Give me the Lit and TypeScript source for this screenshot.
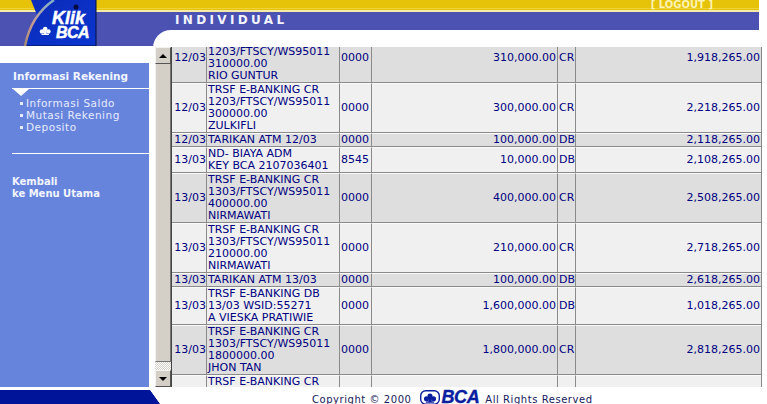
import { LitElement, html, css, svg } from "lit";
import { customElement } from "lit/decorators.js";

type Row = { date: string; lines: string[]; code: string; amount: string; type: string; balance: string };

const rows: Row[] = [
  { date: "12/03", lines: ["TRSF E-BANKING CR", "1203/FTSCY/WS95011", "310000.00", "RIO GUNTUR"], code: "0000", amount: "310,000.00", type: "CR", balance: "1,918,265.00" },
  { date: "12/03", lines: ["TRSF E-BANKING CR", "1203/FTSCY/WS95011", "300000.00", "ZULKIFLI"], code: "0000", amount: "300,000.00", type: "CR", balance: "2,218,265.00" },
  { date: "12/03", lines: ["TARIKAN ATM 12/03"], code: "0000", amount: "100,000.00", type: "DB", balance: "2,118,265.00" },
  { date: "13/03", lines: ["ND- BIAYA ADM", "KEY BCA 2107036401"], code: "8545", amount: "10,000.00", type: "DB", balance: "2,108,265.00" },
  { date: "13/03", lines: ["TRSF E-BANKING CR", "1303/FTSCY/WS95011", "400000.00", "NIRMAWATI"], code: "0000", amount: "400,000.00", type: "CR", balance: "2,508,265.00" },
  { date: "13/03", lines: ["TRSF E-BANKING CR", "1303/FTSCY/WS95011", "210000.00", "NIRMAWATI"], code: "0000", amount: "210,000.00", type: "CR", balance: "2,718,265.00" },
  { date: "13/03", lines: ["TARIKAN ATM 13/03"], code: "0000", amount: "100,000.00", type: "DB", balance: "2,618,265.00" },
  { date: "13/03", lines: ["TRSF E-BANKING DB", "13/03 WSID:55271", "A VIESKA PRATIWIE"], code: "0000", amount: "1,600,000.00", type: "DB", balance: "1,018,265.00" },
  { date: "13/03", lines: ["TRSF E-BANKING CR", "1303/FTSCY/WS95011", "1800000.00", "JHON TAN"], code: "0000", amount: "1,800,000.00", type: "CR", balance: "2,818,265.00" },
  { date: "", lines: ["TRSF E-BANKING CR"], code: "", amount: "", type: "", balance: "" },
];

const clover = (fill: string) => svg`
  <circle cx="10" cy="5.5" r="3.2" fill=${fill}></circle>
  <circle cx="5.6" cy="9" r="3.2" fill=${fill}></circle>
  <circle cx="14.4" cy="9" r="3.2" fill=${fill}></circle>
  <path d="M8.8 8h2.4l1 4.5h3v1.5H4.8v-1.5h3z" fill=${fill}></path>`;

@customElement("app-root")
export class AppRoot extends LitElement {
  static styles = css`
    :host {
      display: block;
      width: 767px;
      height: 404px;
      position: relative;
      overflow: hidden;
      background: #fff;
      font-family: "DejaVu Sans", Verdana, sans-serif;
      font-size: 11px;
    }
    .head { width: 759px; height: 46px; display: flex; flex-direction: column; }
    .gold {
      height: 12px;
      flex: none;
      display: flex;
      justify-content: flex-end;
      padding-right: 46px;
      background: linear-gradient(#e6c208 0 8px, #efd23a 8px 9px, #e6c208 9px 10px, #f5eba8 10px 12px);
    }
    .logout {
      font-size: 10px;
      line-height: 9px;
      height: 11px;
      font-weight: bold;
      letter-spacing: 0;
      color: #fbf3b4;
      white-space: pre;
    }
    .band {
      flex: 1;
      background: #4b52b2;
      padding-left: 175px;
      color: #f4f4ff;
      font-weight: bold;
      font-size: 12px;
      line-height: 17px;
      letter-spacing: 3.35px;
    }
    .logo { position: absolute; left: 24px; top: 0; width: 73px; height: 46px; }
    .logo svg { position: absolute; inset: 0; }
    .klik, .bca {
      position: absolute;
      font-family: "Liberation Sans", Arial, sans-serif;
      font-weight: bold;
      font-style: italic;
      color: #fff;
      line-height: 15px;
      -webkit-text-stroke: 0.5px #fff;
    }
    .klik { left: 28px; top: 11px; font-size: 18px; letter-spacing: 0; }
    .bca { left: 32px; top: 25px; font-size: 16px; letter-spacing: -0.6px; }

    .main { display: flex; height: 341px; }
    .side { width: 153px; flex: none; padding: 17px 0 0 0; box-sizing: border-box; }
    .panel {
      width: 149px;
      height: 324px;
      background: #6684dc;
      color: #fff;
      box-sizing: border-box;
      padding: 7px 0 0 12px;
      display: flex;
      flex-direction: column;
    }
    .ph { font-weight: bold; line-height: 13px; padding-bottom: 5px; border-bottom: 1px solid #fff; padding-left: 1px; color: #f2f5ff; font-size: 10.5px; }
    .tri {
      width: 0;
      height: 0;
      border-left: 8px solid transparent;
      border-right: 8px solid transparent;
      border-top: 7px solid #fff;
      margin-left: 1px;
    }
    ul { list-style: none; margin: 1px 0 0; padding: 0 0 0 8px; }
    li { line-height: 12px; color: #e6ebff; letter-spacing: 0.5px; display: flex; align-items: center; gap: 3px; font-size: 10.5px; }
    li::before { content: ""; width: 3px; height: 3px; background: #e6ebff; flex: none; }
    .sep { height: 1px; background: #fff; margin-top: 20px; }
    .back { margin-top: 22px; font-weight: bold; line-height: 12px; color: #f2f5ff; font-size: 10px; }

    .content {
      flex: 1;
      margin-top: -16px;
      height: 357px;
      background: #fff;
      border-top-left-radius: 18px;
      padding: 17px 0 0 2px;
      box-sizing: border-box;
      display: flex;
      position: relative;
    }
    .sb { width: 16px; height: 340px; flex: none; display: flex; flex-direction: column; background: #d4d0c8; }
    .btn {
      height: 17px;
      flex: none;
      box-sizing: border-box;
      background: #d4d0c8;
      border: 1px solid;
      border-color: #f4f2ee #555 #555 #f4f2ee;
      display: flex;
      align-items: center;
      justify-content: center;
    }
    .thumb { height: 298px; flex: none; background: #d4d0c8; border-left: 1px solid #f4f2ee; border-bottom: 1px solid #777; border-right: 1px solid #777; box-sizing: border-box; }
    .trk { flex: 1; background: repeating-conic-gradient(#fff 0 25%, #d4d0c8 0 50%) 0 0 / 2px 2px; }
    .up { width: 0; height: 0; border: 4px solid transparent; border-top: 0; border-bottom: 4px solid #000; }
    .down { width: 0; height: 0; border: 4px solid transparent; border-bottom: 0; border-top: 4px solid #000; }
    .wrap { width: 589px; height: 340px; overflow: hidden; border-left: 1px solid #444; border-right: 1px solid #888; box-sizing: content-box; }
    table {
      border-collapse: separate;
      border-spacing: 0;
      table-layout: fixed;
      width: 589px;
      margin-top: -14px;
      color: #000080;
      line-height: 12px;
      font-size: 11px;
    }
    td {
      padding: 0;
      vertical-align: middle;
      border-bottom: 1px solid #8a8a8a;
      border-top: 1px solid #fafafa;
      border-right: 1px solid #8a8a8a;
      white-space: nowrap;
      overflow: hidden;
    }
    td:last-child { border-right: 0; }
    tr.a td { background: #dedede; }
    tr.b td { background: #f0f0f0; }
    .r { text-align: right; }
    .n { text-align: right; padding-right: 1px; }
    .c { text-align: left; padding-left: 1px; }
    .line { display: block; }

    .foot { display: flex; height: 19px; width: 767px; }
    .fl { width: 150px; height: 14px; margin-top: 3px; flex: none; background: #00149a; }
    .fcorner { width: 10px; flex: none; height: 14px; margin-top: 3px; background: linear-gradient(to top right, #00149a 0 48%, #fff 52%); }
    .fr {
      flex: none;
      margin-left: 152px;
      display: flex;
      align-items: flex-end;
      color: #16205c;
      font-size: 10px;
      letter-spacing: 0.55px;
      line-height: 12px;
      white-space: nowrap;
    }
    .fl2 { display: flex; align-items: flex-start; margin: 0 6px 0 9px; height: 15px; align-self: flex-start; padding-top: 3px; }
    .fbca { font-family: "Liberation Sans", Arial, sans-serif; font-weight: bold; font-style: italic; font-size: 18px; line-height: 15px; color: #0a1ea0; letter-spacing: -0.4px; margin-left: 1px; -webkit-text-stroke: 0.4px #0a1ea0; }
  `;

  render() {
    return html`
      <div class="head">
        <div class="gold"><span class="logout">[ LOGOUT ]</span></div>
        <div class="band">INDIVIDUAL</div>
      </div>
      <div class="logo">
        <svg width="73" height="46" viewBox="0 0 73 46">
          <defs>
            <linearGradient id="lg" x1="0" y1="0" x2="1" y2="1">
              <stop offset="0" stop-color="#0c2bb8"></stop>
              <stop offset="1" stop-color="#0a35d0"></stop>
            </linearGradient>
            <linearGradient id="arc" x1="0" y1="0" x2="0" y2="1">
              <stop offset="0" stop-color="#7fb0d0"></stop>
              <stop offset="0.5" stop-color="#c89a90"></stop>
              <stop offset="1" stop-color="#a08a70"></stop>
            </linearGradient>
          </defs>
          <path d="M7 0H72V46H1C3 34 7 24 13 15Z" fill="url(#lg)"></path>
          <path d="M72 0v46H1" fill="none" stroke="#06103a" stroke-width="1"></path>
          <path d="M30 0C15 10 5 26 1 46" fill="none" stroke="url(#arc)" stroke-width="2.5"></path>
          <circle cx="52" cy="7" r="2.5" fill="#050a40"></circle>
          <g transform="translate(14 25) scale(0.72)">${clover("#fff")}</g>
        </svg>
        <span class="klik">Klik</span>
        <span class="bca">BCA</span>
      </div>
      <div class="main">
        <div class="side">
          <div class="panel">
            <div class="ph">Informasi Rekening</div>
            <div class="tri"></div>
            <ul>
              <li>Informasi Saldo</li>
              <li>Mutasi Rekening</li>
              <li>Deposito</li>
            </ul>
            <div class="sep"></div>
            <div class="back">Kembali<br />ke Menu Utama</div>
          </div>
        </div>
        <div class="content">
          <div class="sb">
            <div class="btn"><div class="up"></div></div>
            <div class="thumb"></div>
            <div class="trk"></div>
            <div class="btn"><div class="down"></div></div>
          </div>
          <div class="wrap">
            <table>
              <colgroup>
                <col style="width:35px" /><col style="width:133px" /><col style="width:32px" /><col style="width:186px" /><col style="width:18px" /><col />
              </colgroup>
              ${rows.map((r, i) => html`
                <tr class=${i % 2 ? "b" : "a"}>
                  <td class="r">${r.date}</td>
                  <td class="c">${r.lines.map((l) => html`<span class="line">${l}</span>`)}</td>
                  <td class="c">${r.code}</td>
                  <td class="n">${r.amount}</td>
                  <td class="c">${r.type}</td>
                  <td class="n">${r.balance}</td>
                </tr>`)}
            </table>
          </div>
        </div>
      </div>
      <div class="foot">
        <div class="fl"></div>
        <div class="fcorner"></div>
        <div class="fr">
          <span>Copyright © 2000</span>
          <span class="fl2">
            <svg width="20" height="15" viewBox="0 0 20 15">
              <rect x="0.7" y="0.7" width="18.6" height="13.6" rx="5" fill="#fff" stroke="#0a1ea0" stroke-width="1.4"></rect>
              <g transform="translate(2 1.6) scale(0.8)">${clover("#0a1ea0")}</g>
            </svg>
            <span class="fbca">BCA</span>
          </span>
          <span>All Rights Reserved</span>
        </div>
      </div>
    `;
  }
}
